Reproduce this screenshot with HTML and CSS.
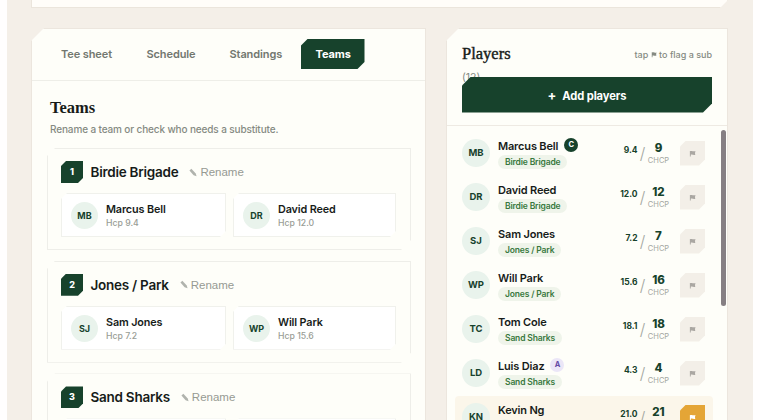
FILE: index.html
```html
<!DOCTYPE html>
<html lang="en">
<head>
    <meta charset="UTF-8">
    <meta name="viewport" content="width=device-width, initial-scale=1.0">
    <title>Teams</title>
    <link rel="stylesheet" href="styles.css">
</head>
<body>
    <svg class="sprite" width="0" height="0">
        <symbol id="flag" viewBox="0 0 8 8">
            <path d="M1 1h1v6.5H1z M2 1.3C4 .7 4.800 2.100 7.500 1.300L6.800 3.300 7.200 5.400C5 6.200 4 4.600 2 5.400z"/>
        </symbol>
        <symbol id="pencil" viewBox="0 0 9 9">
            <path d="M.5 2.200L2.600.2 7.600 5.600 8.500 8.800 5.200 7.700z"/>
        </symbol>
    </svg>
    <div class="shell">
        <div class="summary"></div>
        <div class="columns">
            <div class="card main">
                <nav class="tabs">
                    <a class="tab tab-sheet">Tee sheet</a>
                    <a class="tab tab-schedule">Schedule</a>
                    <a class="tab tab-standings">Standings</a>
                    <a class="tab tab-teams active">Teams</a>
                </nav>
                <div class="teams">
                    <h2>Teams</h2>
                    <p class="hint">Rename a team or check who needs a substitute.</p>
                    <div class="team">
                        <div class="team-head">
                            <span class="team-no">1</span>
                            <span class="team-name">Birdie Brigade</span>
                            <span class="rename"><svg><use href="#pencil"/></svg>Rename</span>
                        </div>
                        <div class="members">
                            <div class="member">
                                <span class="avatar">MB</span>
                                <div><div class="member-name">Marcus Bell</div><div class="member-hcp">Hcp 9.4</div></div>
                            </div>
                            <div class="member">
                                <span class="avatar">DR</span>
                                <div><div class="member-name">David Reed</div><div class="member-hcp">Hcp 12.0</div></div>
                            </div>
                        </div>
                    </div>
                    <div class="team">
                        <div class="team-head">
                            <span class="team-no">2</span>
                            <span class="team-name">Jones / Park</span>
                            <span class="rename"><svg><use href="#pencil"/></svg>Rename</span>
                        </div>
                        <div class="members">
                            <div class="member">
                                <span class="avatar">SJ</span>
                                <div><div class="member-name">Sam Jones</div><div class="member-hcp">Hcp 7.2</div></div>
                            </div>
                            <div class="member">
                                <span class="avatar">WP</span>
                                <div><div class="member-name">Will Park</div><div class="member-hcp">Hcp 15.6</div></div>
                            </div>
                        </div>
                    </div>
                    <div class="team">
                        <div class="team-head">
                            <span class="team-no">3</span>
                            <span class="team-name">Sand Sharks</span>
                            <span class="rename"><svg><use href="#pencil"/></svg>Rename</span>
                        </div>
                        <div class="members">
                            <div class="member"></div>
                            <div class="member"></div>
                        </div>
                    </div>
                </div>
            </div>

            <div class="card side">
                <div class="players-head">
                    <div class="players-title">
                        <h2>Players <span class="count">(12)</span></h2>
                        <span class="tip">tap <svg><use href="#flag"/></svg> to flag a sub</span>
                    </div>
                    <button class="add"><span class="plus">+</span>Add players</button>
                </div>
                <div class="players">
                    <div class="list">
                        <div class="player">
                            <span class="avatar">MB</span>
                            <div class="info"><div class="name">Marcus Bell<span class="mark captain">C</span></div><span class="pill">Birdie Brigade</span></div>
                            <span class="hcp">9.4</span><span class="slash">/</span>
                            <div class="chcp"><b>9</b><small>CHCP</small></div>
                            <button class="flag"><svg><use href="#flag"/></svg></button>
                        </div>
                        <div class="player">
                            <span class="avatar">DR</span>
                            <div class="info"><div class="name">David Reed</div><span class="pill">Birdie Brigade</span></div>
                            <span class="hcp">12.0</span><span class="slash">/</span>
                            <div class="chcp"><b>12</b><small>CHCP</small></div>
                            <button class="flag"><svg><use href="#flag"/></svg></button>
                        </div>
                        <div class="player">
                            <span class="avatar">SJ</span>
                            <div class="info"><div class="name">Sam Jones</div><span class="pill">Jones / Park</span></div>
                            <span class="hcp">7.2</span><span class="slash">/</span>
                            <div class="chcp"><b>7</b><small>CHCP</small></div>
                            <button class="flag"><svg><use href="#flag"/></svg></button>
                        </div>
                        <div class="player">
                            <span class="avatar">WP</span>
                            <div class="info"><div class="name">Will Park</div><span class="pill">Jones / Park</span></div>
                            <span class="hcp">15.6</span><span class="slash">/</span>
                            <div class="chcp"><b>16</b><small>CHCP</small></div>
                            <button class="flag"><svg><use href="#flag"/></svg></button>
                        </div>
                        <div class="player">
                            <span class="avatar">TC</span>
                            <div class="info"><div class="name">Tom Cole</div><span class="pill">Sand Sharks</span></div>
                            <span class="hcp">18.1</span><span class="slash">/</span>
                            <div class="chcp"><b>18</b><small>CHCP</small></div>
                            <button class="flag"><svg><use href="#flag"/></svg></button>
                        </div>
                        <div class="player">
                            <span class="avatar">LD</span>
                            <div class="info"><div class="name">Luis Diaz<span class="mark admin">A</span></div><span class="pill">Sand Sharks</span></div>
                            <span class="hcp">4.3</span><span class="slash">/</span>
                            <div class="chcp"><b>4</b><small>CHCP</small></div>
                            <button class="flag"><svg><use href="#flag"/></svg></button>
                        </div>
                        <div class="player flagged">
                            <span class="avatar">KN</span>
                            <div class="info"><div class="name">Kevin Ng</div><span class="pill"></span></div>
                            <span class="hcp">21.0</span><span class="slash">/</span>
                            <div class="chcp"><b>21</b><small></small></div>
                            <button class="flag"><svg><use href="#flag"/></svg></button>
                        </div>
                    </div>
                    <div class="scrollbar"></div>
                </div>
            </div>
        </div>
    </div>
</body>
</html>
```
FILE: styles.css
```css
* {
    box-sizing: border-box;
}

body {
    margin: 0;
    height: 420px;
    overflow: hidden;
    background: #fffefe;
    font-family: Inter, "Liberation Sans", sans-serif;
    color: #171c19;
}

h2, p {
    margin: 0;
}

button {
    border: none;
    padding: 0;
    font-family: inherit;
}

.sprite {
    display: block;
}

.shell {
    height: 420px;
    margin: 0 7px;
    padding: 0 25px 0 24px;
    background: #f4efe8;
    overflow: hidden;
}

.summary {
    height: 8px;
    border: 1px solid #ebe5dc;
    border-top: none;
    background: #fffdf9;
    clip-path: polygon(0 0, 100% 0, calc(100% - 8px) 100%, 0 100%);
}

.columns {
    display: flex;
    gap: 20px;
    margin-top: 20px;
}

.card {
    height: 420px;
    border: 1px solid #ece6de;
    background: #fefef9;
    clip-path: polygon(13px 0, 100% 0, 100% 100%, 0 100%, 0 13px);
}

.main {
    width: 395px;
}

.side {
    width: 283px;
}

.tabs {
    display: flex;
    gap: 5px;
    height: 52px;
    padding: 10px 0 0 14px;
    border-bottom: 1px solid #eeeee8;
}

.tab {
    height: 30px;
    padding-left: 15px;
    line-height: 31px;
    font-size: 11px;
    font-weight: 600;
    letter-spacing: -0.1px;
    color: #72776f;
    white-space: nowrap;
}

.tab-sheet {
    width: 80.500px;
}

.tab-schedule {
    width: 78px;
}

.tab-standings {
    width: 81px;
}

.tab-teams {
    width: 64px;
}

.active {
    background: #17422c;
    color: #fff;
    font-weight: 700;
    clip-path: polygon(7px 0, 100% 0, 100% calc(100% - 7px), calc(100% - 7px) 100%, 0 100%, 0 7px);
}

h2 {
    font-family: "Liberation Serif", serif;
    font-size: 16.500px;
    font-weight: 700;
    line-height: 20px;
}

.teams {
    padding: 17px 14px 0 15px;
}

.teams h2 {
    margin-left: 3px;
}

.hint {
    margin: 4px 0 0 3px;
    height: 26px;
    font-size: 10px;
    line-height: 15px;
    font-weight: 500;
    letter-spacing: -0.13px;
    color: #858a82;
}

.team {
    height: 102px;
    margin-bottom: 10.700px;
    padding: 12px 14px 0 13px;
    border: 1px solid #eeeee9;
    clip-path: polygon(8px 0, 100% 0, 100% calc(100% - 10px), calc(100% - 10px) 100%, 0 100%, 0 8px);
}

.team-head {
    display: flex;
    align-items: center;
    height: 22px;
}

.team-no {
    width: 22px;
    height: 22px;
    margin-right: 7.500px;
    background: #17422c;
    color: #fff;
    font-size: 9px;
    font-weight: 800;
    line-height: 22px;
    text-align: center;
    clip-path: polygon(5px 0, 100% 0, 100% calc(100% - 5px), calc(100% - 5px) 100%, 0 100%, 0 5px);
}

.team-name {
    font-size: 13.500px;
    font-weight: 600;
    letter-spacing: -0.25px;
}

.rename {
    display: flex;
    align-items: center;
    gap: 3px;
    margin-left: 11px;
    font-family: "Liberation Sans", sans-serif;
    font-size: 11.500px;
    color: #969a93;
}

.rename svg {
    width: 8px;
    height: 9px;
    fill: #b0b3ad;
}

.members {
    display: grid;
    grid-template-columns: 165px 163px;
    gap: 7px;
    margin-top: 10px;
}

.member {
    display: flex;
    gap: 8px;
    height: 44px;
    padding: 8px 9px;
    border: 1px solid #f0f1ec;
    background: #fff;
    clip-path: polygon(6px 0, 100% 0, 100% calc(100% - 6px), calc(100% - 6px) 100%, 0 100%, 0 6px);
}

.avatar {
    display: block;
    flex: none;
    width: 28px;
    height: 28px;
    border-radius: 50%;
    background: #e9f3ec;
    color: #17422c;
    font-size: 9.500px;
    font-weight: 700;
    line-height: 28px;
    text-align: center;
}

.member .avatar {
    width: 27px;
    height: 27px;
    font-size: 9px;
}

.member-name {
    font-size: 10.800px;
    line-height: 15px;
    font-weight: 600;
    letter-spacing: -0.12px;
}

.member-hcp {
    font-size: 8.700px;
    line-height: 12px;
    font-weight: 500;
    color: #999d96;
}

.players-head {
    height: 97px;
    padding: 15px 15px 0;
    border-bottom: 1px solid #eeeae3;
}

.players-title {
    display: flex;
    justify-content: space-between;
    height: 32.500px;
}

.players-title h2 {
    width: 60px;
    font-weight: 400;
    -webkit-text-stroke: 0.4px #171c19;
}

.count {
    display: block;
    font-family: Inter, sans-serif;
    font-size: 10.500px;
    font-weight: 400;
    line-height: 27px;
    color: #858a82;
    -webkit-text-stroke: 0;
}

.tip {
    padding-top: 4px;
    font-size: 9px;
    font-weight: 500;
    line-height: 14px;
    color: #858a82;
}

.tip svg {
    width: 6px;
    height: 7px;
    fill: #858a82;
}

.add {
    width: 250px;
    height: 36px;
    background: #17422c;
    color: #fff;
    font-size: 11.200px;
    font-weight: 700;
    letter-spacing: -0.1px;
    clip-path: polygon(9px 0, 100% 0, 100% calc(100% - 9px), calc(100% - 9px) 100%, 0 100%, 0 9px);
}

.plus {
    margin-right: 6px;
    font-size: 13px;
}

.players {
    display: flex;
    gap: 8px;
    padding: 4px 0 0 8px;
}

.list {
    width: 258px;
    padding-top: 2px;
}

.player {
    display: flex;
    align-items: center;
    height: 42px;
    margin-bottom: 2px;
    padding: 0 8px 0 7px;
}

.flagged {
    background: #fbf6ea;
    border-radius: 4px;
}

.info {
    flex: 1;
    height: 31px;
    margin-left: 8px;
}

.name {
    display: flex;
    gap: 6px;
    height: 17px;
    font-size: 11px;
    line-height: 17px;
    font-weight: 600;
    letter-spacing: -0.17px;
}

.mark {
    width: 14px;
    height: 14px;
    border-radius: 50%;
    font-size: 7.500px;
    line-height: 14px;
    font-weight: 700;
    letter-spacing: 0;
    text-align: center;
}

.captain {
    background: #17422c;
    color: #fff;
}

.admin {
    background: #ebe6f7;
    color: #6549a5;
}

.pill {
    display: block;
    width: fit-content;
    height: 14px;
    padding: 0 7px;
    border-radius: 7px;
    background: #eff4ea;
    color: #38783d;
    font-size: 8.500px;
    line-height: 15px;
    font-weight: 600;
    letter-spacing: -0.15px;
}

.hcp {
    height: 20px;
    font-size: 8.500px;
    line-height: 14px;
    font-weight: 700;
    color: #17422c;
}

.slash {
    width: 10px;
    font-size: 16px;
    line-height: 18px;
    font-weight: 300;
    text-align: center;
    color: #a4a7a1;
}

.chcp {
    display: flex;
    flex-direction: column;
    align-items: center;
    width: 22px;
    margin-right: 10.500px;
    color: #17422c;
}

.chcp b {
    font-size: 11.500px;
    font-weight: 800;
    line-height: 15px;
}

.chcp small {
    height: 9px;
    font-size: 7.500px;
    line-height: 9px;
    color: #a4a7a1;
}

.flag {
    display: flex;
    align-items: center;
    justify-content: center;
    width: 25px;
    height: 25px;
    background: #f3efe8;
    clip-path: polygon(6px 0, 100% 0, 100% calc(100% - 6px), calc(100% - 6px) 100%, 0 100%, 0 6px);
}

.flag svg {
    width: 7px;
    height: 7px;
    fill: #aaa7a2;
}

.flagged .flag {
    background: #e4a536;
}

.flagged .flag svg {
    fill: #fff;
}

.scrollbar {
    width: 5px;
    height: 176px;
    border-radius: 3px;
    background: #867f83;
}
```
